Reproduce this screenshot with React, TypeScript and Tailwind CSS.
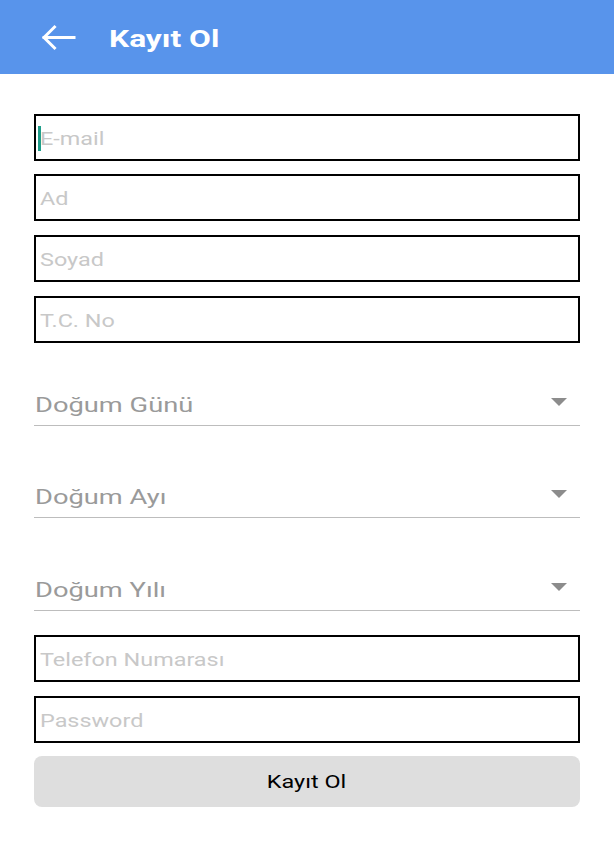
import React from "react";

const font = { fontFamily: "Roboto, 'Noto Sans', sans-serif" };

function TextBox({ label, cursor, className }: { label: string; cursor?: boolean; className?: string }) {
  return (
    <div className={`relative h-[47px] border-2 border-black flex items-center pl-[4px] pt-[3px] ${className ?? ""}`}>
      {cursor && <span className="absolute left-[2px] top-[10px] h-[25px] w-[3px] bg-[#1f9e8a]" />}
      <span className="inline-block origin-left scale-x-[1.3] text-[18px] text-[#c8c8c8] leading-none">{label}</span>
    </div>
  );
}

function Picker({ label, className }: { label: string; className?: string }) {
  return (
    <div className={`h-[70px] border-b border-[#bdbdbd] flex items-end pb-[6px] pl-[1px] ${className ?? ""}`}>
      <div className="flex-1">
        <span className="inline-block origin-left scale-x-[1.3] text-[21px] text-[#9a9a9a] leading-[24px]">{label}</span>
      </div>
      <svg width="18" height="10" viewBox="0 0 18 10" className="mr-[12px] mb-[12px]">
        <path d="M1 1 L17 1 L9 9 Z" fill="#8c8c8c" />
      </svg>
    </div>
  );
}

export default function App() {
  return (
    <div className="w-[614px] h-[846px] bg-white" style={font}>
      <div className="h-[74px] bg-[#5894eb] flex items-center">
        <svg width="40" height="30" viewBox="0 0 40 30" className="ml-[38px] mt-[2px]">
          <path d="M6 14.5 H36 M16.5 4 L6 14.5 L16.5 25" stroke="white" strokeWidth="3" fill="none" strokeLinecap="square" />
        </svg>
        <span className="ml-[31px] mt-[3px] inline-block origin-left scale-x-[1.32] text-[24px] font-bold text-white">Kayıt Ol</span>
      </div>

      <div className="px-[34px] pt-[40px]">
        <TextBox label="E-mail" cursor />
        <TextBox label="Ad" className="mt-[13px]" />
        <TextBox label="Soyad" className="mt-[14px]" />
        <TextBox label="T.C. No" className="mt-[14px]" />

        <Picker label="Doğum Günü" className="mt-[14px] !h-[69px]" />
        <Picker label="Doğum Ayı" className="mt-[22px]" />
        <Picker label="Doğum Yılı" className="mt-[23px]" />

        <TextBox label="Telefon Numarası" className="mt-[24px]" />
        <TextBox label="Password" className="mt-[14px]" />

        <button className="mt-[13px] w-full h-[51px] rounded-[8px] bg-[#dedede] text-black">
          <span className="inline-block scale-x-[1.3] text-[18px]">Kayıt Ol</span>
        </button>
      </div>
    </div>
  );
}
